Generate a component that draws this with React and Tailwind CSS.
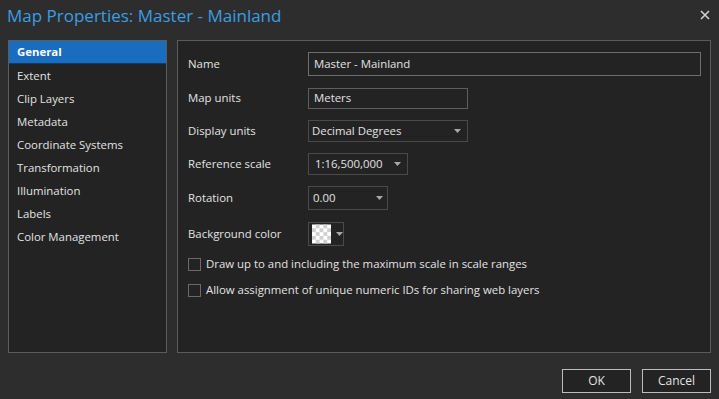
import React from 'react';

const font = { fontFamily: '"Open Sans", "Noto Sans", sans-serif' };

const navItems = ['General', 'Extent', 'Clip Layers', 'Metadata', 'Coordinate Systems', 'Transformation', 'Illumination', 'Labels', 'Color Management'];

const Caret = () => (
    <svg width="7" height="4" viewBox="0 0 7 4" className="shrink-0">
        <path d="M0 0 L7 0 L3.5 4 Z" fill="#a8a8a8" />
    </svg>
);

const Row = ({ label, children, h = 'h-[33px]' }) => (
    <div className={`flex items-center ${h}`}>
        <div className="w-[120px] shrink-0">{label}</div>
        {children}
    </div>
);

const Checker = () => (
    <svg width="20" height="20" viewBox="0 0 20 20">
        <rect width="20" height="20" fill="#ffffff" />
        {[0, 1, 2, 3, 4].map((r) =>
            [0, 1, 2, 3, 4].map((c) =>
                (r + c) % 2 === 1 ? <rect key={`${r}-${c}`} x={c * 4} y={r * 4} width="4" height="4" fill="#cfcfcf" /> : null
            )
        )}
    </svg>
);

const App = () => {
    return (
        <div className="w-[719px] h-[399px] bg-[#2d2d2d] text-[#e2e2e2] text-[11.4px] flex flex-col overflow-hidden" style={font}>
            <div className="h-[40px] flex items-start justify-between pl-[7px] pr-[8px]">
                <div className="text-[17px] text-[#3a9ee4] leading-none pt-[7px]">Map Properties: Master - Mainland</div>
                <svg width="10" height="10" viewBox="0 0 10 10" className="mt-[10px] mr-[1px]">
                    <path d="M1 1 L9 9 M9 1 L1 9" stroke="#d0d0d0" strokeWidth="1.6" />
                </svg>
            </div>

            <div className="flex px-[8px] gap-[10px] h-[313px]">
                <div className="w-[159px] shrink-0 border border-[#5c5c5c] bg-[#232323]">
                    {navItems.map((item, i) => (
                        <div
                            key={item}
                            className={`h-[23px] flex items-center pl-[8px] ${i === 0 ? 'bg-[#1a6cbf] font-bold text-white border-b border-[#0e3e70]' : ''}`}
                        >
                            {item}
                        </div>
                    ))}
                </div>

                <div className="flex-1 border border-[#5c5c5c] bg-[#232323] pl-[10px] pr-[9px] pt-[10px]">
                    <Row label="Name" h="h-[26px]">
                        <div className="flex-1 h-[24px] border border-[#6e6e6e] flex items-center px-[5px]">Master - Mainland</div>
                    </Row>
                    <div className="h-[10px]" />
                    <Row label="Map units" h="h-[22px]">
                        <div className="w-[160px] h-[21px] border border-[#5e5e5e] flex items-center px-[5px]">Meters</div>
                    </Row>
                    <div className="h-[11px]" />
                    <Row label="Display units" h="h-[22px]">
                        <div className="w-[160px] h-[22px] border border-[#4a4a4a] flex items-center justify-between pl-[3px] pr-[6px]">
                            <span>Decimal Degrees</span>
                            <Caret />
                        </div>
                    </Row>
                    <div className="h-[11px]" />
                    <Row label="Reference scale" h="h-[22px]">
                        <div className="w-[100px] h-[22px] border border-[#4a4a4a] flex items-center justify-between pl-[6px] pr-[6px]">
                            <span>1:16,500,000</span>
                            <Caret />
                        </div>
                    </Row>
                    <div className="h-[11px]" />
                    <Row label="Rotation" h="h-[24px]">
                        <div className="w-[80px] h-[24px] border border-[#4a4a4a] flex items-center justify-between pl-[4px] pr-[4px]">
                            <span>0.00</span>
                            <Caret />
                        </div>
                    </Row>
                    <div className="h-[12px]" />
                    <Row label="Background color" h="h-[24px]">
                        <div className="w-[36px] h-[24px] border border-[#4a4a4a] flex items-center gap-[5px] pl-[3px]">
                            <Checker />
                            <Caret />
                        </div>
                    </Row>
                    <div className="h-[10px]" />
                    <label className="flex items-center gap-[5px] h-[16px]">
                        <span className="w-[13px] h-[13px] border border-[#6a6a6a] bg-[#232323] shrink-0" />
                        <span>Draw up to and including the maximum scale in scale ranges</span>
                    </label>
                    <div className="h-[10px]" />
                    <label className="flex items-center gap-[5px] h-[16px]">
                        <span className="w-[13px] h-[13px] border border-[#6a6a6a] bg-[#232323] shrink-0" />
                        <span>Allow assignment of unique numeric IDs for sharing web layers</span>
                    </label>
                </div>
            </div>

            <div className="flex justify-end gap-[11px] pr-[8px] pt-[16px]">
                <button className="w-[69px] h-[24px] border border-[#bdbdbd] bg-[#232323] text-[#e2e2e2] text-[12px]">OK</button>
                <button className="w-[69px] h-[24px] border border-[#bdbdbd] bg-[#232323] text-[#e2e2e2] text-[12px]">Cancel</button>
            </div>
        </div>
    );
};

export default App;
